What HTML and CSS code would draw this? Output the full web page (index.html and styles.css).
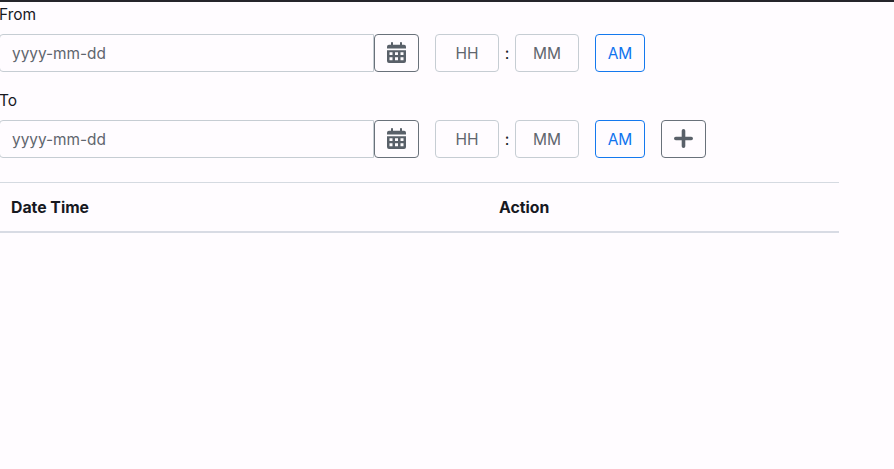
FILE: index.html
```html
<!DOCTYPE html>
<html lang="en">
<head>
<meta charset="utf-8">
<title>Date range</title>
<link rel="stylesheet" href="styles.css">
</head>
<body>
<svg width="0" height="0" class="defs">
  <symbol id="calendar" viewBox="0 0 19 21">
    <path fill-rule="evenodd" d="M0 6.600V4.700Q0 2.700 2 2.700H4V.9Q4 0 4.900 0H5.200Q6 0 6 .9V2.700H13V.9Q13 0 13.800 0H14.100Q15 0 15 .9V2.700H17Q19 2.700 19 4.700V6.600ZM0 8.200H19V19Q19 21 17 21H2Q0 21 0 19ZM2.500 10.200V13H5.500V10.200ZM8 10.200V13H11V10.200ZM13.500 10.200V13H16.500V10.200ZM2.500 15.300V18.300H5.500V15.300ZM8 15.300V18.300H11V15.300ZM13.500 15.300V18.300H16.500V15.300Z"/>
  </symbol>
</svg>
<main class="panel">
  <label class="label" for="from">From</label>
  <div class="row">
    <div class="group">
      <input class="field date" id="from" placeholder="yyyy-mm-dd">
      <button class="btn icon-btn" aria-label="Calendar"><svg class="cal"><use href="#calendar"/></svg></button>
    </div>
    <div class="time">
      <input class="field unit" placeholder="HH"><span class="colon">:</span><input class="field unit" placeholder="MM">
    </div>
    <button class="btn meridian">AM</button>
  </div>
  <label class="label" for="to">To</label>
  <div class="row">
    <div class="group">
      <input class="field date" id="to" placeholder="yyyy-mm-dd">
      <button class="btn icon-btn" aria-label="Calendar"><svg class="cal"><use href="#calendar"/></svg></button>
    </div>
    <div class="time">
      <input class="field unit" placeholder="HH"><span class="colon">:</span><input class="field unit" placeholder="MM">
    </div>
    <button class="btn meridian">AM</button>
    <button class="btn icon-btn" aria-label="Add"><svg class="plus" viewBox="0 0 19 19"><path d="M9.500 1.800V17.200M1.800 9.500H17.200"/></svg></button>
  </div>
  <div class="table-head">
    <div>Date Time</div>
    <div>Action</div>
  </div>
</main>
</body>
</html>
```
FILE: styles.css
```css
* { box-sizing: border-box; }
body {
  margin: 0;
  height: 469px;
  overflow: hidden;
  border-top: 2px solid #25252b;
  background: #fffcff;
  color: #17191f;
  font: 16px/24px Inter, "Liberation Sans", sans-serif;
}
.defs { display: none; }
.panel { width: 840px; margin-left: -1px; }
.label {
  display: block;
  height: 24px;
  margin-bottom: 8px;
  padding-top: 1px;
  font-size: 15.5px;
}
.row { display: flex; gap: 16px; margin-bottom: 16px; }
.group, .time { display: flex; }
.field, .btn {
  height: 38px;
  margin: 0;
  border: 1px solid #c6cdd3;
  border-radius: 4px;
  background: transparent;
  font: inherit;
  font-size: 15.5px;
}
.field::placeholder { color: #5f666e; opacity: 1; }
.date { width: 375px; padding: 0 12px; border-radius: 4px 0 0 4px; font-size: 15.4px; }
.unit { width: 64px; padding: 0; text-align: center; }
.colon { width: 16px; line-height: 38px; text-align: center; }
.btn { display: flex; align-items: center; justify-content: center; padding: 0; }
.icon-btn { width: 45px; border-color: #69717a; color: #596069; }
.meridian { width: 50px; padding-top: 2px; border-color: #1479ee; color: #0f74ee; }
.cal { width: 19px; height: 21px; fill: currentColor; margin-bottom: 2px; }
.plus {
  width: 19px;
  height: 19px;
  margin-bottom: 2px;
  fill: none;
  stroke: currentColor;
  stroke-width: 3.6;
  stroke-linecap: round;
}
.table-head {
  display: grid;
  grid-template-columns: 488px 1fr;
  height: 51px;
  margin-top: 24px;
  padding: 13px 12px 11px;
  border-top: 1px solid #d5dae1;
  border-bottom: 2px solid #d8dbe4;
  font-size: 15.8px;
  font-weight: 700;
}
```
